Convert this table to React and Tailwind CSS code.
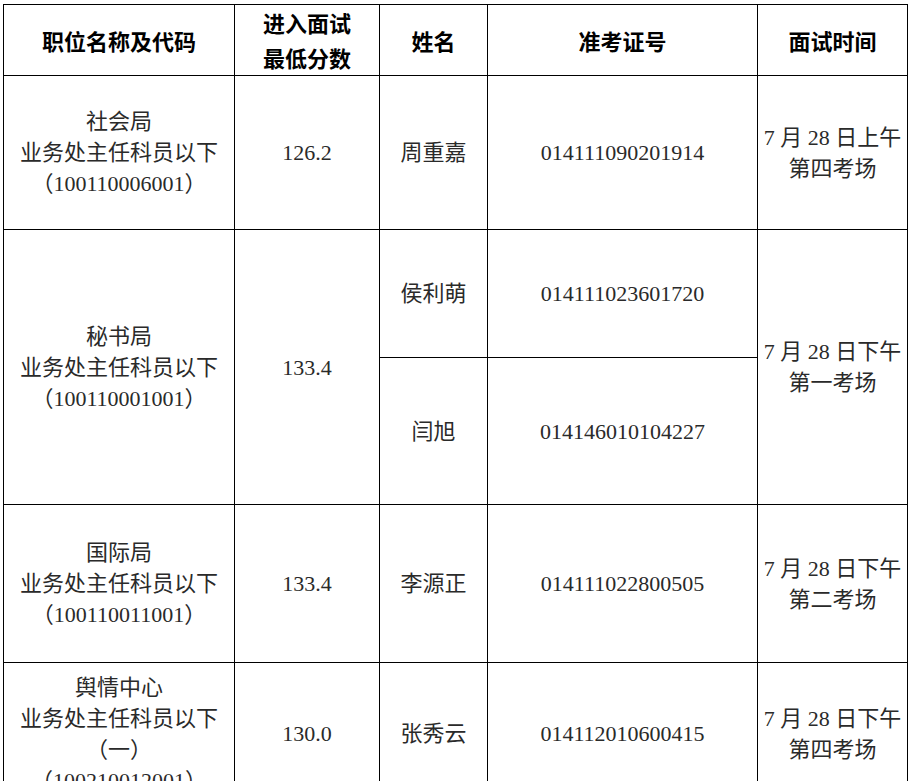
export default function App() {
  const body = "font-['Liberation_Serif','Noto_Sans_CJK_SC',serif] text-[22px] leading-[31px] text-[#2a2a2a]";
  const head = "font-['Noto_Sans_CJK_SC',sans-serif] font-bold text-[22px] leading-[35px] text-black";
  const cell = "border border-black text-center align-middle p-0";

  return (
    <div className="bg-white w-[914px] h-[781px] overflow-hidden pt-[4px] pl-[3px]">
      <table className={`table-fixed border-collapse w-[904px] ${body}`}>
        <colgroup>
          <col className="w-[231px]" />
          <col className="w-[145px]" />
          <col className="w-[108px]" />
          <col className="w-[270px]" />
          <col className="w-[150px]" />
        </colgroup>
        <thead>
          {/* 表头 */}
          <tr className="h-[69px]">
            <th className={`${cell} ${head}`}>职位名称及代码</th>
            <th className={`${cell} ${head}`}>
              进入面试
              <br />
              最低分数
            </th>
            <th className={`${cell} ${head}`}>姓名</th>
            <th className={`${cell} ${head}`}>准考证号</th>
            <th className={`${cell} ${head}`}>面试时间</th>
          </tr>
        </thead>
        <tbody>
          <tr className="h-[154px]">
            <td className={cell}>
              社会局
              <br />
              业务处主任科员以下
              <br />
              （100110006001）
            </td>
            <td className={cell}>126.2</td>
            <td className={cell}>周重嘉</td>
            <td className={cell}>014111090201914</td>
            <td className={cell}>
              7 月 28 日上午
              <br />
              第四考场
            </td>
          </tr>

          <tr className="h-[128px]">
            <td className={cell} rowSpan={2}>
              秘书局
              <br />
              业务处主任科员以下
              <br />
              （100110001001）
            </td>
            <td className={cell} rowSpan={2}>133.4</td>
            <td className={cell}>侯利萌</td>
            <td className={cell}>014111023601720</td>
            <td className={cell} rowSpan={2}>
              7 月 28 日下午
              <br />
              第一考场
            </td>
          </tr>
          <tr className="h-[147px]">
            <td className={cell}>闫旭</td>
            <td className={cell}>014146010104227</td>
          </tr>

          <tr className="h-[158px]">
            <td className={cell}>
              国际局
              <br />
              业务处主任科员以下
              <br />
              （100110011001）
            </td>
            <td className={cell}>133.4</td>
            <td className={cell}>李源正</td>
            <td className={cell}>014111022800505</td>
            <td className={cell}>
              7 月 28 日下午
              <br />
              第二考场
            </td>
          </tr>

          <tr className="h-[142px]">
            <td className={cell}>
              舆情中心
              <br />
              业务处主任科员以下
              <br />
              （一）
              <br />
              （100210012001）
            </td>
            <td className={cell}>130.0</td>
            <td className={cell}>张秀云</td>
            <td className={cell}>014112010600415</td>
            <td className={cell}>
              7 月 28 日下午
              <br />
              第四考场
            </td>
          </tr>
        </tbody>
      </table>
    </div>
  );
}
